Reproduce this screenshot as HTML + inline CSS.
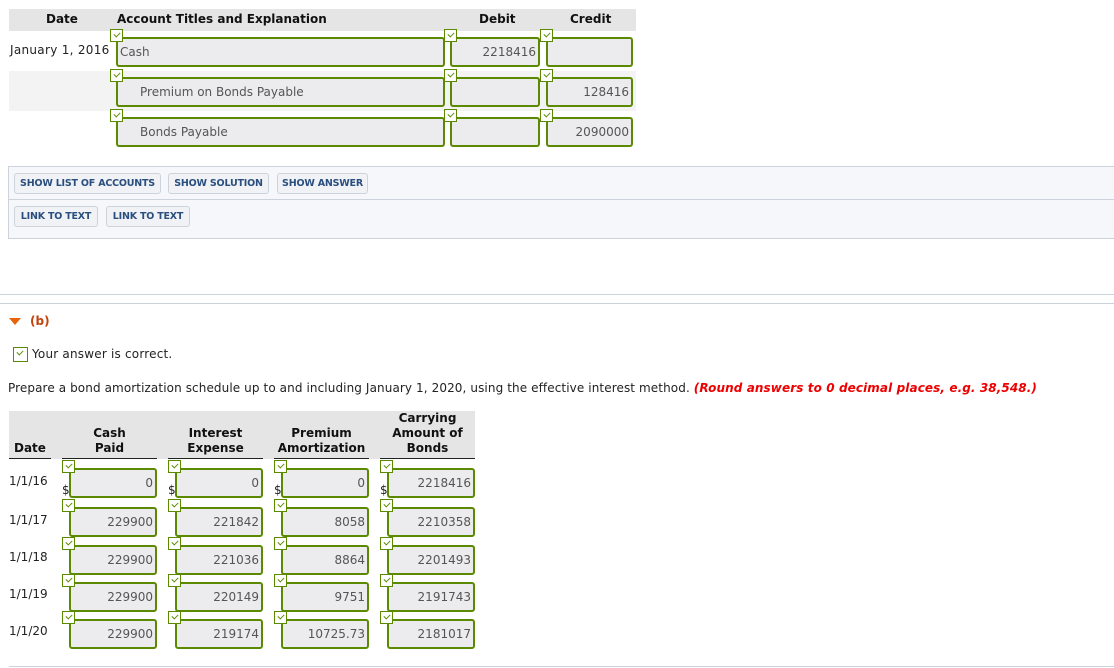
<!DOCTYPE html>
<html><head><meta charset="utf-8"><style>
body{margin:0;width:1114px;height:668px;background:#fff;font-family:"DejaVu Sans","Liberation Sans",sans-serif;font-size:12px;color:#222;position:relative;overflow:hidden}
.a{position:absolute;white-space:nowrap}
.in{position:absolute;box-sizing:border-box;border:2px solid #5b8a00;border-radius:3px;background:#ececee;color:#555;height:30px;line-height:26px;padding:0 2px;font-size:12px;white-space:nowrap}
.r{text-align:right}
.ck{position:absolute;width:13px;height:13px;box-sizing:border-box;border:1px solid #5b8a00;background:#fff}
.ck:after{content:"";position:absolute;left:3px;top:2px;width:5px;height:3px;border-left:1.5px solid #5b8a00;border-bottom:1.5px solid #5b8a00;transform:rotate(-45deg)}
.btn{position:absolute;box-sizing:border-box;height:21px;border:1px solid #cdd3da;border-radius:3px;background:#f0f2f5;color:#2a4f7f;font-weight:bold;font-size:9.5px;line-height:19px;text-align:center;white-space:nowrap;letter-spacing:-0.2px;overflow:hidden}
.h{font-weight:bold;text-align:center;color:#111}
.ul{position:absolute;height:1px;background:#222}
</style></head><body>
<div class="a" style="left:9px;top:9px;width:627px;height:22px;background:#e5e5e5"></div>
<div class="a h" style="left:46px;top:12px">Date</div>
<div class="a h" style="left:117px;top:12px">Account Titles and Explanation</div>
<div class="a h" style="left:479px;top:12px">Debit</div>
<div class="a h" style="left:570px;top:12px">Credit</div>
<div class="a" style="left:9px;top:71px;width:627px;height:40px;background:#f3f3f3"></div>
<div class="a" style="left:10px;top:43px;letter-spacing:0.3px">January 1, 2016</div>

<div class="in" style="left:116px;top:37px;width:329px">Cash</div>
<div class="in r" style="left:450px;top:37px;width:90px">2218416</div>
<div class="in" style="left:546px;top:37px;width:87px"></div>
<div class="ck" style="left:110px;top:29px"></div><div class="ck" style="left:444px;top:29px"></div><div class="ck" style="left:540px;top:29px"></div>

<div class="in" style="left:116px;top:77px;width:329px;padding-left:22px">Premium on Bonds Payable</div>
<div class="in" style="left:450px;top:77px;width:90px"></div>
<div class="in r" style="left:546px;top:77px;width:87px">128416</div>
<div class="ck" style="left:110px;top:69px"></div><div class="ck" style="left:444px;top:69px"></div><div class="ck" style="left:540px;top:69px"></div>

<div class="in" style="left:116px;top:117px;width:329px;padding-left:22px">Bonds Payable</div>
<div class="in" style="left:450px;top:117px;width:90px"></div>
<div class="in r" style="left:546px;top:117px;width:87px">2090000</div>
<div class="ck" style="left:110px;top:109px"></div><div class="ck" style="left:444px;top:109px"></div><div class="ck" style="left:540px;top:109px"></div>

<div class="a" style="left:8px;top:166px;width:1110px;height:73px;box-sizing:border-box;border:1px solid #ccd3dc;background:#f5f7fa"></div>
<div class="a" style="left:9px;top:199px;width:1105px;height:1px;background:#ccd3dc"></div>
<div class="btn" style="left:14px;top:173px;width:147px">SHOW LIST OF ACCOUNTS</div>
<div class="btn" style="left:168px;top:173px;width:101px">SHOW SOLUTION</div>
<div class="btn" style="left:277px;top:173px;width:91px">SHOW ANSWER</div>
<div class="btn" style="left:14px;top:206px;width:84px">LINK TO TEXT</div>
<div class="btn" style="left:106px;top:206px;width:84px">LINK TO TEXT</div>

<div class="a" style="left:0;top:294px;width:1114px;height:1px;background:#ccd3dc"></div>
<div class="a" style="left:0;top:303px;width:1114px;height:1px;background:#ccd3dc"></div>

<div class="a" style="left:9px;top:318px;width:0;height:0;border-left:6px solid transparent;border-right:6px solid transparent;border-top:7px solid #e8630a"></div>
<div class="a" style="left:30px;top:314px;color:#c2410c;font-weight:bold;font-size:12px">(b)</div>
<div class="ck" style="left:13px;top:347px;width:15px;height:15px"></div>
<div class="a" style="left:32px;top:347px;letter-spacing:0.2px">Your answer is correct.</div>
<div class="a" style="left:8px;top:381px;letter-spacing:0.1px">Prepare a bond amortization schedule up to and including January 1, 2020, using the effective interest method. <b style="color:#ee0000;font-style:italic">(Round answers to 0 decimal places, e.g. 38,548.)</b></div>

<div class="a" style="left:9px;top:411px;width:466px;height:48px;background:#e5e5e5"></div>
<div class="a h" style="left:14px;top:441px">Date</div>
<div class="a h" style="left:62px;top:426px;width:95px;line-height:15px">Cash<br>Paid</div>
<div class="a h" style="left:168px;top:426px;width:95px;line-height:15px">Interest<br>Expense</div>
<div class="a h" style="left:274px;top:426px;width:95px;line-height:15px">Premium<br>Amortization</div>
<div class="a h" style="left:380px;top:411px;width:95px;line-height:15px">Carrying<br>Amount of<br>Bonds</div>
<div class="ul" style="left:9px;top:458px;width:42px"></div>
<div class="ul" style="left:62px;top:458px;width:95px"></div>
<div class="ul" style="left:168px;top:458px;width:95px"></div>
<div class="ul" style="left:274px;top:458px;width:95px"></div>
<div class="ul" style="left:380px;top:458px;width:95px"></div>

<div class="a" style="left:9px;top:474px">1/1/16</div>
<div class="a" style="left:9px;top:513px">1/1/17</div>
<div class="a" style="left:9px;top:550px">1/1/18</div>
<div class="a" style="left:9px;top:587px">1/1/19</div>
<div class="a" style="left:9px;top:624px">1/1/20</div>

<div class="a" style="left:62px;top:483px">$</div><div class="a" style="left:168px;top:483px">$</div><div class="a" style="left:274px;top:483px">$</div><div class="a" style="left:380px;top:483px">$</div>

<div class="in r" style="left:69px;top:468px;width:88px">0</div>
<div class="in r" style="left:175px;top:468px;width:88px">0</div>
<div class="in r" style="left:281px;top:468px;width:88px">0</div>
<div class="in r" style="left:387px;top:468px;width:88px">2218416</div>
<div class="ck" style="left:62px;top:460px"></div><div class="ck" style="left:168px;top:460px"></div><div class="ck" style="left:274px;top:460px"></div><div class="ck" style="left:380px;top:460px"></div>

<div class="in r" style="left:69px;top:507px;width:88px">229900</div>
<div class="in r" style="left:175px;top:507px;width:88px">221842</div>
<div class="in r" style="left:281px;top:507px;width:88px">8058</div>
<div class="in r" style="left:387px;top:507px;width:88px">2210358</div>
<div class="ck" style="left:62px;top:499px"></div><div class="ck" style="left:168px;top:499px"></div><div class="ck" style="left:274px;top:499px"></div><div class="ck" style="left:380px;top:499px"></div>

<div class="in r" style="left:69px;top:545px;width:88px">229900</div>
<div class="in r" style="left:175px;top:545px;width:88px">221036</div>
<div class="in r" style="left:281px;top:545px;width:88px">8864</div>
<div class="in r" style="left:387px;top:545px;width:88px">2201493</div>
<div class="ck" style="left:62px;top:537px"></div><div class="ck" style="left:168px;top:537px"></div><div class="ck" style="left:274px;top:537px"></div><div class="ck" style="left:380px;top:537px"></div>

<div class="in r" style="left:69px;top:582px;width:88px">229900</div>
<div class="in r" style="left:175px;top:582px;width:88px">220149</div>
<div class="in r" style="left:281px;top:582px;width:88px">9751</div>
<div class="in r" style="left:387px;top:582px;width:88px">2191743</div>
<div class="ck" style="left:62px;top:574px"></div><div class="ck" style="left:168px;top:574px"></div><div class="ck" style="left:274px;top:574px"></div><div class="ck" style="left:380px;top:574px"></div>

<div class="in r" style="left:69px;top:619px;width:88px">229900</div>
<div class="in r" style="left:175px;top:619px;width:88px">219174</div>
<div class="in r" style="left:281px;top:619px;width:88px">10725.73</div>
<div class="in r" style="left:387px;top:619px;width:88px">2181017</div>
<div class="ck" style="left:62px;top:611px"></div><div class="ck" style="left:168px;top:611px"></div><div class="ck" style="left:274px;top:611px"></div><div class="ck" style="left:380px;top:611px"></div>

<div class="a" style="left:9px;top:666px;width:1105px;height:1px;background:#ccd3dc"></div>
</body></html>
